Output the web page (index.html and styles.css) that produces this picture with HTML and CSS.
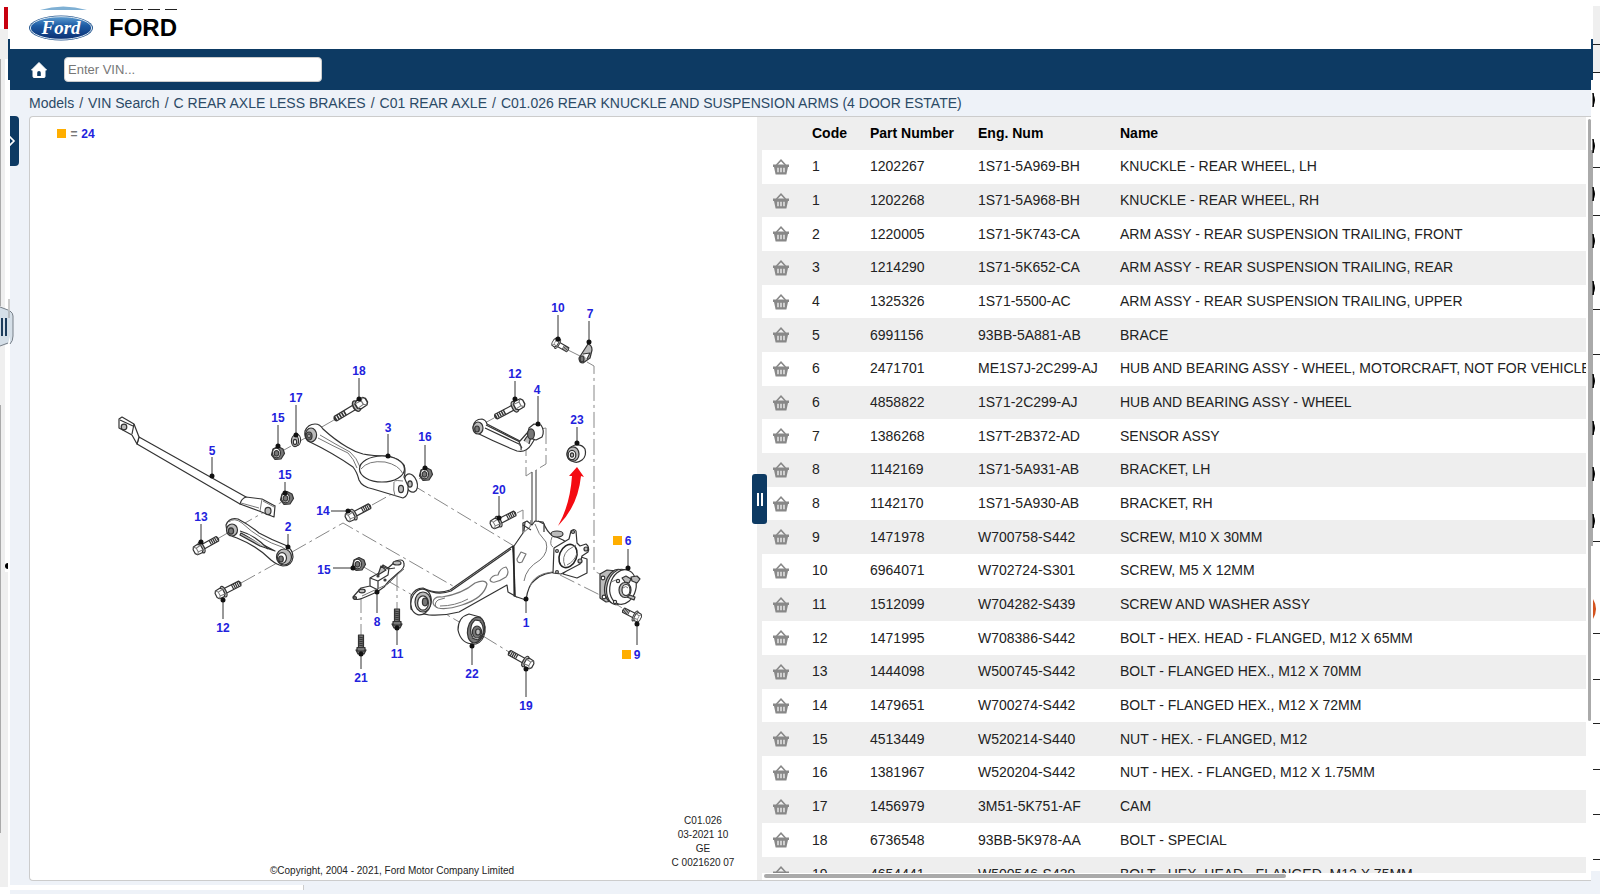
FILE: index.html
```html
<!DOCTYPE html>
<html lang="en">
<head>
  <meta charset="UTF-8">
  <title>FORD - C01.026</title>
  <link rel="stylesheet" href="styles.css">
</head>
<body>
  <!-- shared icons -->
  <svg class="defs" width="0" height="0">
    <symbol id="basket" viewBox="0 0 18 16">
      <path d="M4.5 6L9 1.2 13.500 6" fill="none" stroke="#888" stroke-width="1.5"/>
      <path d="M1 5.600h16v2.400h-1l-1.600 7.400H3.600L2 8H1z" fill="#888"/>
      <path d="M6 8.800v4.400M9 8.800v4.400M12 8.800v4.400" stroke="#fff" stroke-width="1.2"/>
    </symbol>
  </svg>

  <div class="edge edge-left">
    <svg width="16" height="894" viewBox="0 0 16 894">
      <path d="M0 29h8v30H0zM0 59h5v828H0zM5 572h3v315H5z" fill="#efefef"/>
      <path d="M.5 59v247M.5 405v428" stroke="#aaa"/>
      <path d="M4 7h4v22H4z" fill="#c8000f"/>
      <path d="M8 39h2v41H8z" fill="#0d3a63"/>
      <path d="M0 307l9 3q4 2 4 6v20q0 5-3 8V336l-2 8-8 2z" fill="#d5dfe8"/>
      <path d="M0 307l8 3M10 311q3 2 3 5v20q0 5-3 8M0 346l8-3" fill="none" stroke="#777f88"/>
      <path d="M9 299v19" stroke="#999"/>
      <path d="M1 318h2v18H1zM5 318h2v18H5z" fill="#1d3d5c"/>
      <path d="M8 563a3 3 0 0 0 0 6z" fill="#000"/>
    </svg>
  </div>

  <div class="app">
    <header class="brand">
      <svg class="logo" width="66" height="36" viewBox="0 0 66 36">
        <defs>
          <linearGradient id="oval" x1="0" y1="0" x2="0" y2="1">
            <stop offset="0" stop-color="#5b9bd0"/>
            <stop offset=".4" stop-color="#1c5ba4"/>
            <stop offset="1" stop-color="#0b2f72"/>
          </linearGradient>
        </defs>
        <path d="M12 4Q35-3 59 4z" fill="#7fb0d4"/>
        <ellipse cx="33" cy="22" rx="32" ry="12.5" fill="#24568f"/>
        <ellipse cx="33" cy="22" rx="30.6" ry="11.3" fill="url(#oval)" stroke="#dce8f2" stroke-width="1"/>
        <text x="33" y="28" class="logo-text">Ford</text>
      </svg>
      <div class="brand-name">
        <div class="ticks"><span></span><span></span><span></span><span></span></div>
        <h1>FORD</h1>
      </div>
    </header>

    <nav class="topbar">
      <a href="#" class="home" aria-label="Home">
        <svg width="18" height="18" viewBox="0 0 18 18">
          <path d="M9 1.5L1.5 9H3v6.5q0 1 1 1h10q1 0 1-1V9h1.5z" fill="#fff" stroke="#fff" stroke-linejoin="round"/>
          <path d="M7.2 15v-3.200a1.800 1.800 0 0 1 3.600 0V15z" fill="#0d3a63"/>
        </svg>
      </a>
      <input type="text" class="vin" aria-label="VIN" placeholder="Enter VIN...">
    </nav>

    <div class="crumbs">
      <a href="#">Models</a><span>/</span><a href="#">VIN Search</a><span>/</span><a href="#">C REAR AXLE LESS BRAKES</a><span>/</span><a href="#">C01 REAR AXLE</a><span>/</span><a href="#">C01.026 REAR KNUCKLE AND SUSPENSION ARMS (4 DOOR ESTATE)</a>
    </div>

    <main class="content">
      <button class="side-tab" aria-label="Open tree">
        <svg width="9" height="14" viewBox="0 0 9 14"><path d="M-1 2l5 5-5 5" fill="none" stroke="#fff" stroke-width="1.6"/></svg>
      </button>

      <div class="panel">
        <section class="diagram">
          <svg viewBox="30 117 727 763">
            <defs>
              <g id="bolt" class="part">
                <path d="M3-2.6h18q2 2.6 0 5.200H3z"/>
                <path d="M13-2.4v4.800M15-2.4v4.800M17-2.4v4.800M19-2.4v4.800M21-2v4"/>
                <ellipse cx="3" cy="0" rx="2.4" ry="5.8" class="shade"/>
                <path d="M-4-4.4L1-4.8 3.200-2.6v5.200L1 4.800l-5-.4-1.500-2.200v-4.400z"/>
                <path d="M-4-4.4l2 2.400v4.200l-2 2.200M-2-2l5-.6M-2 2.200l5 .4" class="thin"/>
              </g>
              <g id="stud" class="part">
                <path d="M-2.5-15h5v15h-5z" class="dark"/>
                <path d="M-2.5-13l5 1M-2.5-11l5 1M-2.5-9l5 1M-2.5-7l5 1M-2.5-5l5 1"/>
                <path d="M-4-2.5h8V1H-4zM-5 0q5 3 10 0L3 4h-6z" class="dark"/>
              </g>
              <g id="nut" class="part">
                <path d="M-5-4L0-6.5 5-4l1.500 4.500L3 6l-6 .5L-6.5 2z" class="dark"/>
                <ellipse cx="-1.5" cy="0" rx="4" ry="4.8"/>
                <ellipse cx="-1.5" cy=".3" rx="2.3" ry="2.8" class="dark"/>
              </g>
            </defs>

            <!-- centre lines -->
            <g class="axis">
              <path d="M277 454l30-17M320 428l14-8M238 527l49-28M219 538l12-7M241 583l36-20"/>
              <path d="M292 552l51-29 110 63"/>
              <path d="M372 505l54-30M411 484l103 62"/>
              <path d="M362 566l52 30M430 605l31 18M483 636l26 16"/>
              <path d="M361 597v40M397 575v36M494 418l-11 6"/>
              <path d="M568 350l12 6M587 362l7 4v205l12 6M560 575l44 22 20 12"/>
              <path d="M526 440v36l6-4M546 428l-6 1M546 428v36l-10 6M517 513l6-3v17"/>
            </g>
            <path d="M532 472v52M536 470v52" class="leader"/>

            <!-- 5 brace -->
            <g class="part">
              <path d="M139 437l107 60-6 7-103-60z"/>
              <path d="M119 419l3-2 12 7 5 13-2 7-5-9-13-7z"/>
              <path d="M134 424l-2 10M120 420l13 6"/>
              <circle cx="124" cy="427" r="2.8" class="shade"/>
              <path d="M246 497l16 2 13 7-1 11-15-6-19-7q1-5 6-7z"/>
              <path d="M262 499l-2 12M263 501l11 6M241 503l18 5" class="thin"/>
              <ellipse cx="268" cy="511" rx="3" ry="3.6" class="shade"/>
            </g>

            <!-- 2 trailing arm, front -->
            <g class="part">
              <path d="M226 525q3-8 12-6 10 5 21 14 13 7 26 12 8 4 8 12-1 9-10 9-6-1-12-6-14-14-34-22-11-3-11-13z"/>
              <path d="M229 522q5-5 13 1 18 17 40 24 9 5 8 14" class="thin"/>
              <path d="M241 533l34 18-15-5-20-11z" class="shade"/>
              <path d="M240 531q15 4 28 18"/>
              <ellipse cx="232" cy="530" rx="5.5" ry="6" class="shade"/>
              <ellipse cx="231" cy="531" rx="2.6" ry="3.2" class="dark"/>
              <ellipse cx="284" cy="557" rx="7.5" ry="8" class="shade"/>
              <ellipse cx="282" cy="558" rx="4.5" ry="5.4"/>
              <ellipse cx="281" cy="559" rx="2.3" ry="3" class="dark"/>
            </g>

            <!-- 3 trailing arm, rear -->
            <g class="part">
              <ellipse cx="411" cy="483" rx="6" ry="9.5" transform="rotate(-20 411 483)"/>
              <ellipse cx="410" cy="484" rx="2.2" ry="3.2" class="shade"/>
              <path d="M305 431q3-7 10-7 5 0 8 5 12 11 24 18 8 5 16 7 10 2 24 2 12 2 17 9 2 6 0 12l4 9q1 10-5 12l-30-9q-11-2-14-9-2-8-6-13-20-14-45-26-4-4-3-10z"/>
              <path d="M320 435q15 9 30 17 7 6 10 15M318 438q15 8 30 15 6 6 9 15" class="thin"/>
              <ellipse cx="382" cy="469" rx="22.5" ry="13"/>
              <path d="M361 469q7-9 24-7 14 3 18 12" class="thin"/>
              <path d="M394 481q2-1 9 0M394 482q-1 9 1 14" class="thin"/>
              <ellipse cx="401" cy="489" rx="2.5" ry="3.6" class="shade"/>
              <ellipse cx="311" cy="435" rx="5.6" ry="7" class="shade"/>
              <ellipse cx="309" cy="436" rx="3" ry="4" class="dark"/>
              <ellipse cx="309" cy="436" rx="1.2" ry="2"/>
            </g>

            <!-- 4 upper arm -->
            <g class="part">
              <path d="M473 427q1-8 9-8 4 1 5 5l33 17 8-9 8 5-5 8q-5 8-14 6-20-8-40-18-4-2-4-6z"/>
              <path d="M485 428l34 16 3 4M486 425l34 17" class="fold"/>
              <path d="M519 442q3 5 2 8M524 441q4-7 8-8l-3 11" class="shade"/>
              <path d="M529 428l5-4 7 1q4 6 1 12l-6 3q-6-1-8-7z"/>
              <ellipse cx="531" cy="434" rx="3.4" ry="5.2" class="dark"/>
              <ellipse cx="478" cy="428" rx="5" ry="6" class="shade"/>
              <ellipse cx="477" cy="429" rx="2.3" ry="3" class="dark"/>
            </g>

            <!-- 7 sensor -->
            <g class="part">
              <path d="M579 358l9-14q4 1 4 6l-2 8-7 5q-4 0-4-5z" class="shade"/>
              <path d="M583 354l7-1-3 6"/>
              <ellipse cx="582" cy="359" rx="2" ry="3" class="dark"/>
            </g>

            <!-- 23 bush -->
            <g class="part">
              <path d="M567 454q1-7 8-9 7-1 10 4 2 7-3 11-5 4-10 1-5-2-5-7z"/>
              <ellipse cx="573" cy="454" rx="6" ry="7.2" class="shade"/>
              <ellipse cx="572" cy="455" rx="3.8" ry="4.6"/>
              <ellipse cx="572" cy="455" rx="1.6" ry="2.2" class="shade"/>
            </g>

            <!-- 8 bracket -->
            <g class="part">
              <path d="M353 597l8-9 9-2v-8l9-5 4-8 5 3 8-7q8-3 8 3 1 4-6 9l-9 8-5 6-7 5-14 6q-7 3-10 0z"/>
              <path d="M370 578l8 3v8M378 581l10-6 1-7M382 566l6 3 7-1M370 586l8 4" class="fold"/>
              <path d="M381 566l-3 9 8-5z" class="shade"/>
              <path d="M362 596l15-7 11-5 9-9 7-6" class="thin"/>
              <ellipse cx="362" cy="591" rx="3.2" ry="1.8" class="shade"/>
              <ellipse cx="397" cy="563" rx="4" ry="2" class="shade"/>
              <circle cx="378" cy="576" r="1" class="dark"/>
              <circle cx="385" cy="580" r="1" class="dark"/>
              <circle cx="355" cy="598" r="1.5" class="dark"/>
            </g>

            <!-- 1 knuckle -->
            <g class="part">
              <path d="M411 596q4-8 12-8 14 7 27 2l63-44 4 51-9-5-1-7-48 27q-15 4-30 3-15-3-18-6z"/>
              <path d="M424 589q14 7 27 2l60-42" class="fold"/>
              <path d="M433 602q1-6 9-5 20-3 33-14 10-4 12 1-3 14-25 21-15 5-24 3-5-2-5-6z" class="slot"/>
              <path d="M490 580q2-5 8-5 2-7 8-8 4 5 0 10-6 4-11 5-4 1-5-2z" class="slot"/>
              <path d="M437 608q-4-4 1-8l7-2M440 606q15 0 28-7" class="thin"/>
              <ellipse cx="421" cy="602" rx="10" ry="13" transform="rotate(15 421 602)"/>
              <ellipse cx="423" cy="602" rx="8" ry="10" class="shade"/>
              <ellipse cx="423" cy="603" rx="5.4" ry="7.2"/>
              <ellipse cx="425" cy="602" rx="2.6" ry="3.8" class="dark"/>
              <path d="M514 546l9-13v-10l4-2 5 4 3-4 8 1q4 10 9 13l11 5 8 5-6 27q-21-1-30 8-7 5-9 20l-12-4z"/>
              <path d="M513 546l2 50" class="heavy"/>
              <path d="M535 524q3 10 11 18 3 10-6 18-14 8-16 21M552 537q-3 8 1 10M530 586q4-12 22-14M523 533l7-6 1-7" class="thin"/>
              <path d="M523 525l8 5M525 522l-1 9M538 521l6 3v8"/>
              <path d="M517 559l4-7 5 2-4 8q-5 2-5-3z" class="slot"/>
              <ellipse cx="557" cy="534" rx="6" ry="3" class="shade"/>
              <path d="M578 556l9 3v14l-10 5-14-4z"/>
              <path d="M554 548l15-9 2-8q3-3 5 0l1 12 3 3 6-2q4 3 2 8l-6 4-2 8-19 10-8-1z"/>
              <ellipse cx="568" cy="556" rx="8.5" ry="12" transform="rotate(22 568 556)" class="heavy"/>
              <path d="M565 566q-4-9 3-16l8-5M567 565q8-4 10-12" class="thin"/>
              <circle cx="557" cy="551" r="1.4"/><circle cx="573" cy="532" r="1.5" class="shade"/>
              <circle cx="586" cy="549" r="2" class="shade"/><circle cx="557" cy="572" r="1.4"/><circle cx="580" cy="561" r="2" class="shade"/>
            </g>

            <!-- 22 bush -->
            <g class="part">
              <path d="M458 630q0-13 11-16l11 3q6 5 5 15-2 10-9 12-15 1-18-14z"/>
              <ellipse cx="476" cy="630" rx="8.4" ry="13" transform="rotate(12 476 630)" class="dark"/>
              <ellipse cx="477" cy="630" rx="6.4" ry="9.6"/>
              <path d="M471 625l4-5 6 1M472 638l6 2 5-6"/>
              <ellipse cx="477" cy="632" rx="4.6" ry="6" class="dark"/>
              <ellipse cx="478" cy="632" rx="2.4" ry="3" class="shade"/>
            </g>

            <!-- 6 hub -->
            <g class="part">
              <path d="M600 574l7-4 10 1 2 29-13 2-6-4z" class="shade"/>
              <ellipse cx="616" cy="586" rx="11" ry="17" transform="rotate(14 616 586)" class="shade"/>
              <ellipse cx="619" cy="587" rx="12" ry="18" transform="rotate(14 619 587)"/>
              <ellipse cx="623" cy="587" rx="13" ry="17.5" transform="rotate(14 623 587)"/>
              <path d="M622 578l4-2 5 3-2 4-4-1zM631 577l6-1 3 3-3 4-5-2zM627 594l8 3-1 3-7-3z" class="shade"/>
              <ellipse cx="625" cy="590" rx="6" ry="7.5" class="shade"/>
              <ellipse cx="626" cy="590" rx="4" ry="5.5"/>
              <path d="M623 588q3-3 5 0M611 582l5-2" class="thin"/>
              <circle cx="603" cy="578" r="1.8"/><circle cx="604" cy="597" r="1.8"/>
              <circle cx="615" cy="602" r="1.6"/><circle cx="618" cy="581" r="1.6"/>
            </g>

            <!-- 15/16 nuts, 17 cam -->
            <use href="#nut" transform="translate(278 453)"/>
            <use href="#nut" transform="translate(287 498)"/>
            <use href="#nut" transform="translate(359 564)"/>
            <use href="#nut" transform="translate(426 474)"/>
            <g class="part"><ellipse cx="297" cy="440" rx="3.6" ry="5.6"/><ellipse cx="295" cy="441" rx="3.6" ry="5.6" class="shade"/><ellipse cx="295" cy="442" rx="1.6" ry="2.6"/></g>

            <!-- bolts -->
            <use href="#bolt" transform="translate(199 549) rotate(-29)"/>
            <use href="#bolt" transform="translate(221 593) rotate(-27)"/>
            <use href="#bolt" transform="translate(351 516) rotate(-28)"/>
            <use href="#bolt" transform="translate(496 523) rotate(-27)"/>
            <use href="#bolt" transform="translate(360 404) rotate(149) scale(1.35 1)"/>
            <use href="#bolt" transform="translate(518 405) rotate(152) scale(1.18 1)"/>
            <use href="#bolt" transform="translate(528 663) rotate(209)"/>
            <use href="#bolt" transform="translate(637 617) rotate(207) scale(.72 .95)"/>
            <use href="#bolt" transform="translate(556 343) rotate(30) scale(.65 .9)"/>
            <use href="#stud" transform="translate(361 650)"/>
            <use href="#stud" transform="translate(397 624)"/>

            <path d="M577 467l7 10-3-1q-3 30-23 50 12-21 14-50h-3z" fill="#f40b12"/>

            <!-- leaders and callouts -->
            <path class="leader" d="M359 378v21M388 434v22M296 405v30M278 425v21M285 482v11M212 457v19M201 524v18M288 534v13M223 619v-19M331 511h17M333 568h20M361 669v-15M377 613v-21M397 645v-17M472 665v-19M526 697v-28M526 613v-14M499 496v22M628 549v19M637 645v-21M425 445v23M515 381v18M538 396v28M558 315v24M589 321v21M577 427v16"/>
            <path class="dots" d="M359 399h0M388 456h0M296 435h0M278 446h0M285 493h0M212 476h0M201 542h0M288 547h0M223 600h0M348 511h0M353 568h0M361 654h0M377 592h0M397 628h0M472 646h0M526 669h0M526 599h0M499 518h0M628 568h0M637 624h0M425 468h0M515 399h0M538 424h0M558 339h0M589 342h0M577 443h0"/>
            <path class="mark" d="M57 129h9v9h-9zM613 536h9v9h-9zM622 650h9v9h-9z"/>

            <text x="74" y="138" class="equals" text-anchor="middle">=</text>
            <g class="callout">
              <text x="88" y="138">24</text>
              <text x="558" y="312">10</text>
              <text x="590" y="318">7</text>
              <text x="359" y="375">18</text>
              <text x="515" y="378">12</text>
              <text x="537" y="394">4</text>
              <text x="296" y="402">17</text>
              <text x="278" y="422">15</text>
              <text x="388" y="432">3</text>
              <text x="577" y="424">23</text>
              <text x="425" y="441">16</text>
              <text x="212" y="455">5</text>
              <text x="285" y="479">15</text>
              <text x="499" y="494">20</text>
              <text x="323" y="515">14</text>
              <text x="201" y="521">13</text>
              <text x="288" y="531">2</text>
              <text x="628" y="545">6</text>
              <text x="324" y="574">15</text>
              <text x="377" y="626">8</text>
              <text x="526" y="627">1</text>
              <text x="223" y="632">12</text>
              <text x="397" y="658">11</text>
              <text x="637" y="659">9</text>
              <text x="472" y="678">22</text>
              <text x="361" y="682">21</text>
              <text x="526" y="710">19</text>
            </g>
            <g class="note">
              <text x="703" y="824">C01.026</text>
              <text x="703" y="838">03-2021 10</text>
              <text x="703" y="852">GE</text>
              <text x="703" y="866">C 0021620 07</text>
              <text x="392" y="874">©Copyright, 2004 - 2021, Ford Motor Company Limited</text>
            </g>
          </svg>
        </section>

        <div class="splitter">
          <button class="grip" aria-label="Resize panels"><span></span><span></span></button>
        </div>

        <section class="parts">
          <div class="scroll">
            <table>
              <colgroup><col class="c-cart"><col class="c-code"><col class="c-part"><col class="c-eng"><col></colgroup>
              <thead>
                <tr><th></th><th>Code</th><th>Part Number</th><th>Eng. Num</th><th>Name</th></tr>
              </thead>
              <tbody id="rows"></tbody>
            </table>
          </div>
          <div class="hbar"></div>
          <div class="vbar"></div>
        </section>
      </div>
    </main>
    <div class="tail"></div>
  </div>

  <div class="edge edge-right">
    <svg width="9" height="894" viewBox="0 0 9 894">
      <path d="M2 6h7v66H2z" fill="#efefef"/>
      <path d="M0 39h2v41H0z" fill="#0d3a63"/>
      <path d="M0 871h9v23H0z" fill="#eef2f8"/>
      <path d="M0 150h2v396H0z" fill="#aaa"/>
      <path d="M2 44.5h7M2 72.5h7M2 167.500h7M2 215.500h7M2 309.500h7M2 354.500h7M2 541.500h7M2 633.500h7M2 679.500h7M2 723.500h7M2 769.500h7M2 814.500h7M2 859.500h7" stroke="#222"/>
      <path d="M2 93q3 7 0 14zM2 139q3 7 0 14zM2 187q3 7 0 14zM2 234q3 7 0 14zM2 281q3 7 0 14zM2 374q3 7 0 14zM2 421q3 7 0 14zM2 467q3 7 0 14zM2 514q3 7 0 14z" fill="#000" stroke="#000"/>
      <path d="M2 599q6 10 0 20z" fill="#d4531f"/>
    </svg>
  </div>

  <script src="script.js"></script>
</body>
</html>
```

FILE: styles.css
```css
* {
  box-sizing: border-box;
}

body {
  margin: 0;
  height: 100vh;
  display: grid;
  grid-template-columns: 10px 1fr 9px;
  overflow: hidden;
  background: #fff;
  color: #222;
  font: 14px/17px Arial, "Liberation Sans", sans-serif;
}

.defs {
  position: absolute;
}

.edge {
  height: 100vh;
}

.edge-left {
  position: relative;
  z-index: 2;
}

.edge svg {
  display: block;
}

.app {
  display: flex;
  flex-direction: column;
  min-width: 0;
  height: 100vh;
  background: #eef2f8;
}

/* header */
.brand {
  display: flex;
  gap: 15px;
  height: 49px;
  padding: 6px 0 0 18px;
  background: #fff;
}

.logo {
  display: block;
}

.logo-text {
  font: italic bold 19px "Liberation Serif", serif;
  fill: #fff;
  text-anchor: middle;
}

.brand-name {
  color: #000;
}

.ticks {
  display: flex;
  gap: 5px;
  padding: 3px 0 0 5px;
}

.ticks span {
  width: 12px;
  height: 1px;
  background: #222;
}

.brand-name h1 {
  margin: 4px 0 0;
  font-size: 24px;
  line-height: 28px;
}

.topbar {
  display: flex;
  align-items: center;
  gap: 16px;
  height: 41px;
  padding-left: 20px;
  background: #0d3a63;
}

.home svg {
  display: block;
}

.vin {
  width: 258px;
  height: 25px;
  padding: 0 3px;
  border: 1px solid #ccc;
  border-radius: 4px;
  background: #fff;
  font: 13px Arial, "Liberation Sans", sans-serif;
}

.vin::placeholder {
  color: #777;
}

.crumbs {
  height: 26px;
  padding: 5px 0 0 19px;
  white-space: nowrap;
  color: #34495e;
}

.crumbs a {
  color: #2c4a66;
  text-decoration: none;
}

.crumbs span {
  margin: 0 5px;
}

/* content */
.content {
  position: relative;
  display: flex;
  flex: 1;
  min-height: 0;
  padding-left: 19px;
}

.side-tab {
  position: absolute;
  left: 0;
  top: 0;
  width: 9px;
  height: 50px;
  padding: 0;
  border: 0;
  border-radius: 0 4px 4px 0;
  background: #0d3a63;
}

.side-tab svg {
  display: block;
}

.panel {
  display: flex;
  flex: 1;
  min-width: 0;
  border: 1px solid #ccc;
  border-right: 0;
  border-radius: 4px 0 0 4px;
  background: #fff;
}

.diagram {
  flex: 727 1 0;
  min-width: 0;
}

.diagram svg {
  display: block;
  width: 100%;
  height: 100%;
}

.part path,
.part ellipse,
.part circle {
  fill: #fff;
  stroke: #333;
  stroke-width: 1.2;
  stroke-linejoin: round;
}

.part .shade {
  fill: #bbb;
}

.part .dark {
  fill: #777;
}

.part .thin {
  fill: none;
  stroke: #777;
  stroke-width: 1;
}

.part .fold {
  fill: none;
}

.part .slot {
  stroke: #777;
}

.part .heavy {
  stroke: #222;
  stroke-width: 1.6;
}

.axis {
  fill: none;
  stroke: #888;
  stroke-width: 1;
  stroke-dasharray: 16 4 3 4;
}

.leader {
  stroke: #333;
}

.dots {
  stroke: #111;
  stroke-width: 5;
  stroke-linecap: round;
}

.mark {
  fill: #ffae00;
}

.callout {
  font-size: 12px;
  font-weight: bold;
  fill: #2222dd;
  text-anchor: middle;
}

.equals {
  font-size: 12px;
  font-weight: bold;
  fill: #777;
}

.note {
  font-size: 10px;
  fill: #222;
  text-anchor: middle;
}

.splitter {
  position: relative;
  width: 5px;
  background: #eee;
}

.grip {
  position: absolute;
  left: -5px;
  top: 357px;
  z-index: 1;
  display: flex;
  align-items: center;
  justify-content: center;
  gap: 2px;
  width: 15px;
  height: 50px;
  padding: 0;
  border: 0;
  border-radius: 3px;
  background: #0d3a63;
}

.grip span {
  width: 2px;
  height: 13px;
  background: #fff;
}

/* parts list */
.parts {
  position: relative;
  flex: 829 1 0;
  min-width: 0;
}

.scroll {
  height: calc(100% - 7px);
  margin-right: 5px;
  overflow: hidden;
}

table {
  width: 1000px;
  height: 774px;
  table-layout: fixed;
  border-collapse: collapse;
}

.c-cart { width: 45px; }
.c-code { width: 58px; }
.c-part { width: 108px; }
.c-eng { width: 142px; }

th,
td {
  padding: 8px 5px;
  text-align: left;
  white-space: nowrap;
}

th {
  color: #000;
}

thead,
tbody tr:nth-child(even) {
  background: #eee;
}

.cart {
  display: block;
  margin-left: 5px;
  padding: 0;
  border: 0;
  background: none;
}

.cart svg {
  display: block;
}

.hbar {
  position: absolute;
  left: 2px;
  bottom: 2px;
  width: 63%;
  height: 4px;
  border-radius: 2px;
  background: #aaa;
}

.vbar {
  position: absolute;
  right: 0;
  top: 2px;
  width: 3px;
  height: 602px;
  border-radius: 2px;
  background: #aaa;
}

.tail {
  width: 294px;
  height: 5px;
  margin: 4px 0;
  border-right: 1px solid #ccc;
  background: #fff;
}
```

FILE: script.js
```js
const parts = [
  ['1', '1202267', '1S71-5A969-BH', 'KNUCKLE - REAR WHEEL, LH'],
  ['1', '1202268', '1S71-5A968-BH', 'KNUCKLE - REAR WHEEL, RH'],
  ['2', '1220005', '1S71-5K743-CA', 'ARM ASSY - REAR SUSPENSION TRAILING, FRONT'],
  ['3', '1214290', '1S71-5K652-CA', 'ARM ASSY - REAR SUSPENSION TRAILING, REAR'],
  ['4', '1325326', '1S71-5500-AC', 'ARM ASSY - REAR SUSPENSION TRAILING, UPPER'],
  ['5', '6991156', '93BB-5A881-AB', 'BRACE'],
  ['6', '2471701', 'ME1S7J-2C299-AJ', 'HUB AND BEARING ASSY - WHEEL, MOTORCRAFT, NOT FOR VEHICLE'],
  ['6', '4858822', '1S71-2C299-AJ', 'HUB AND BEARING ASSY - WHEEL'],
  ['7', '1386268', '1S7T-2B372-AD', 'SENSOR ASSY'],
  ['8', '1142169', '1S71-5A931-AB', 'BRACKET, LH'],
  ['8', '1142170', '1S71-5A930-AB', 'BRACKET, RH'],
  ['9', '1471978', 'W700758-S442', 'SCREW, M10 X 30MM'],
  ['10', '6964071', 'W702724-S301', 'SCREW, M5 X 12MM'],
  ['11', '1512099', 'W704282-S439', 'SCREW AND WASHER ASSY'],
  ['12', '1471995', 'W708386-S442', 'BOLT - HEX. HEAD - FLANGED, M12 X 65MM'],
  ['13', '1444098', 'W500745-S442', 'BOLT - FLANGED HEX., M12 X 70MM'],
  ['14', '1479651', 'W700274-S442', 'BOLT - FLANGED HEX., M12 X 72MM'],
  ['15', '4513449', 'W520214-S440', 'NUT - HEX. - FLANGED, M12'],
  ['16', '1381967', 'W520204-S442', 'NUT - HEX. - FLANGED, M12 X 1.75MM'],
  ['17', '1456979', '3M51-5K751-AF', 'CAM'],
  ['18', '6736548', '93BB-5K978-AA', 'BOLT - SPECIAL'],
  ['19', '4654441', 'W500546-S439', 'BOLT - HEX. HEAD - FLANGED, M12 X 75MM']
];

const cart = '<button class="cart" aria-label="Add to basket"><svg width="18" height="16"><use href="#basket"/></svg></button>';

document.getElementById('rows').innerHTML = parts.map(function (row) {
  return '<tr><td>' + cart + '</td><td>' + row.join('</td><td>') + '</td></tr>';
}).join('');
```
